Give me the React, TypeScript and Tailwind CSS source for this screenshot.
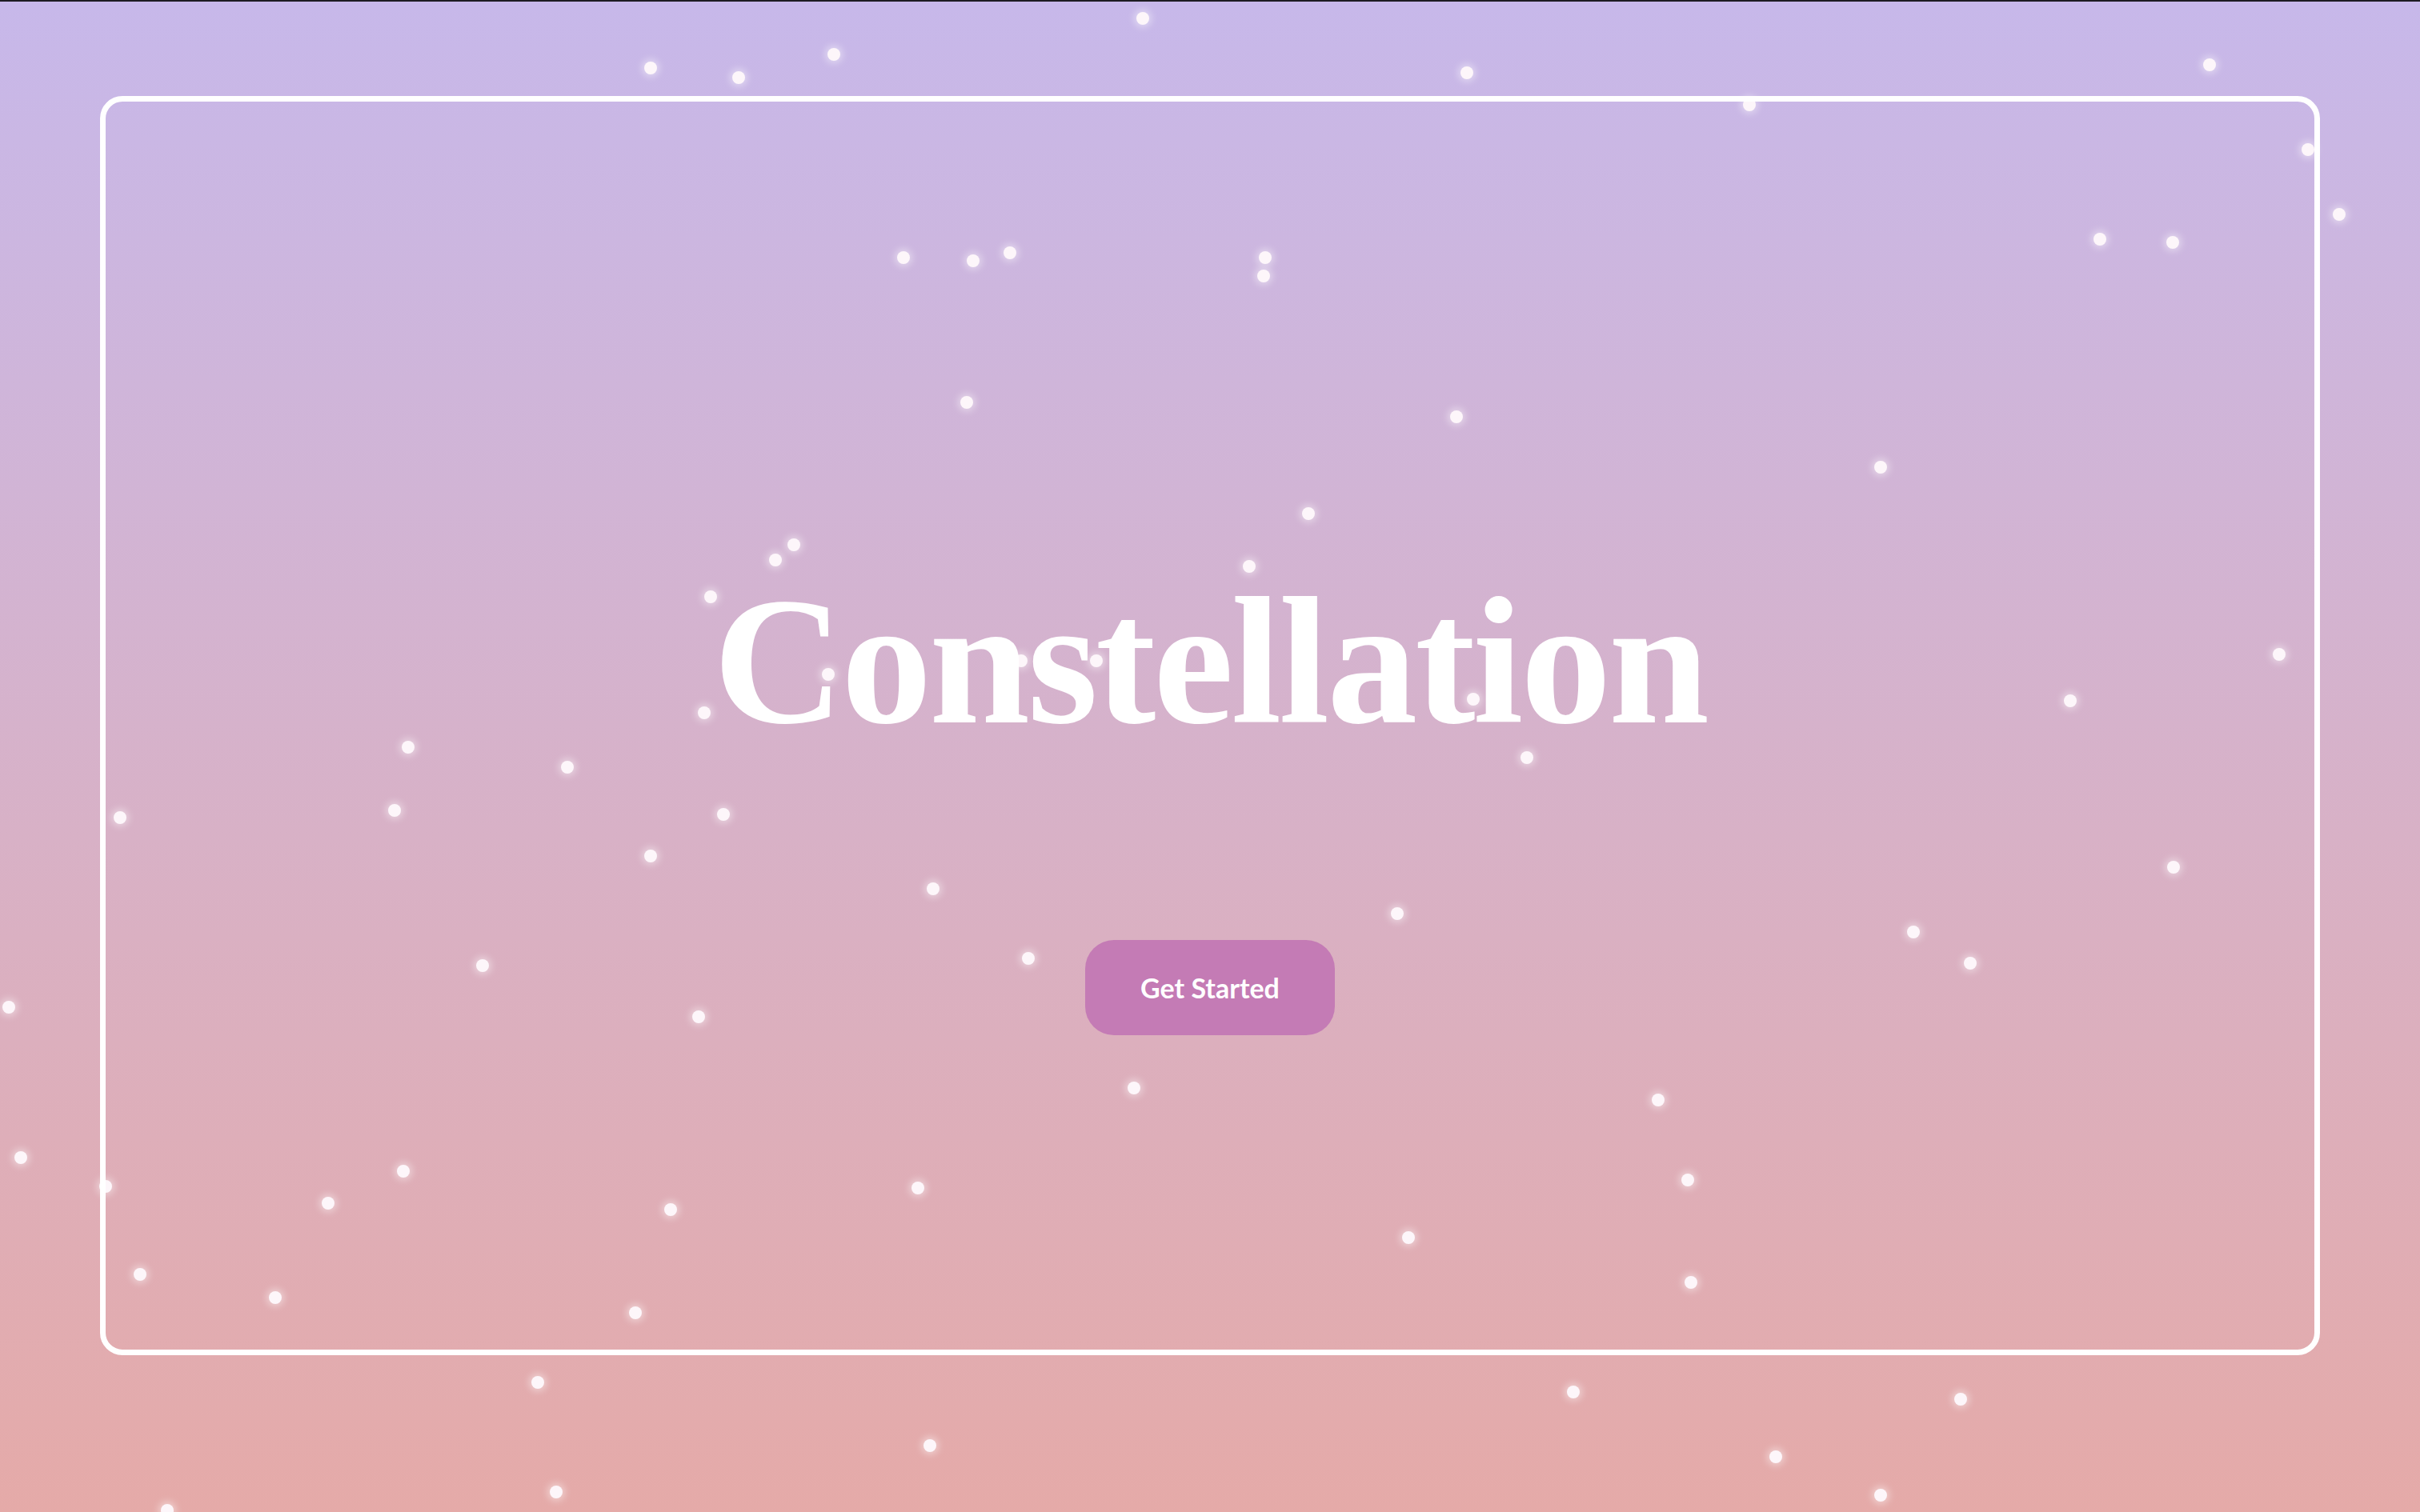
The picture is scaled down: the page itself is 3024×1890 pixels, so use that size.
import React from "react";

// star positions, measured on a 1568px-wide copy of the design
const STARS: ReadonlyArray<readonly [number, number]> = [
  [740, 11], [421, 43], [478, 49], [540, 34], [950, 46], [1431, 41], [1133, 67],
  [1495, 96], [1515, 138], [1360, 154], [1407, 156], [585, 166], [630, 168],
  [654, 163], [819, 166], [818, 178], [626, 260], [943, 269], [1218, 302],
  [847, 332], [514, 352], [502, 362], [809, 366], [460, 386], [1476, 423],
  [536, 436], [456, 461], [661, 427], [710, 427], [954, 452], [1341, 453],
  [989, 490], [264, 483], [367, 496], [255, 524], [77, 529], [468, 527],
  [421, 554], [604, 575], [1408, 561], [905, 591], [1239, 603], [1276, 623],
  [666, 620], [312, 625], [5, 652], [452, 658], [734, 704], [1074, 712],
  [13, 749], [68, 768], [261, 758], [212, 779], [1093, 764], [594, 769],
  [434, 783], [912, 801], [90, 825], [1095, 830], [178, 840], [411, 850],
  [348, 895], [1019, 901], [1270, 906], [602, 936], [1150, 943], [360, 966],
  [1218, 968], [108, 978],
];

const SCALE = 3024 / 1568;

function Starfield() {
  return (
    <div className="pointer-events-none absolute inset-0" aria-hidden>
      {STARS.map(([x, y], index) => (
        <span
          key={`star-${index}`}
          className="absolute h-4 w-4 rounded-full bg-[#fdf6fa] shadow-[0_0_10px_3px_rgba(255,255,255,0.45)]"
          style={{ left: x * SCALE - 7, top: y * SCALE - 8 }}
        />
      ))}
    </div>
  );
}

export default function App() {
  return (
    <div className="relative h-[1890px] w-full overflow-hidden border-t-2 border-[#1d1b22] bg-gradient-to-b from-[#c7b8ea] to-[#e5aaa8] px-[125px] pt-[118px]">
      <Starfield />
      <div className="relative flex h-[1574px] flex-col items-center rounded-[28px] border-[7px] border-white pt-[587px]">
        <h1 className="font-['Liberation_Serif',serif] text-[226px] leading-none font-bold tracking-[-3px] text-white">
          Constellation
        </h1>
        <button
          type="button"
          className="mt-[235px] flex h-[119px] w-[312px] items-center justify-center rounded-[36px] bg-[#c47bb5] font-['Lato',sans-serif] text-[34px] font-bold text-white"
        >
          Get Started
        </button>
      </div>
    </div>
  );
}
